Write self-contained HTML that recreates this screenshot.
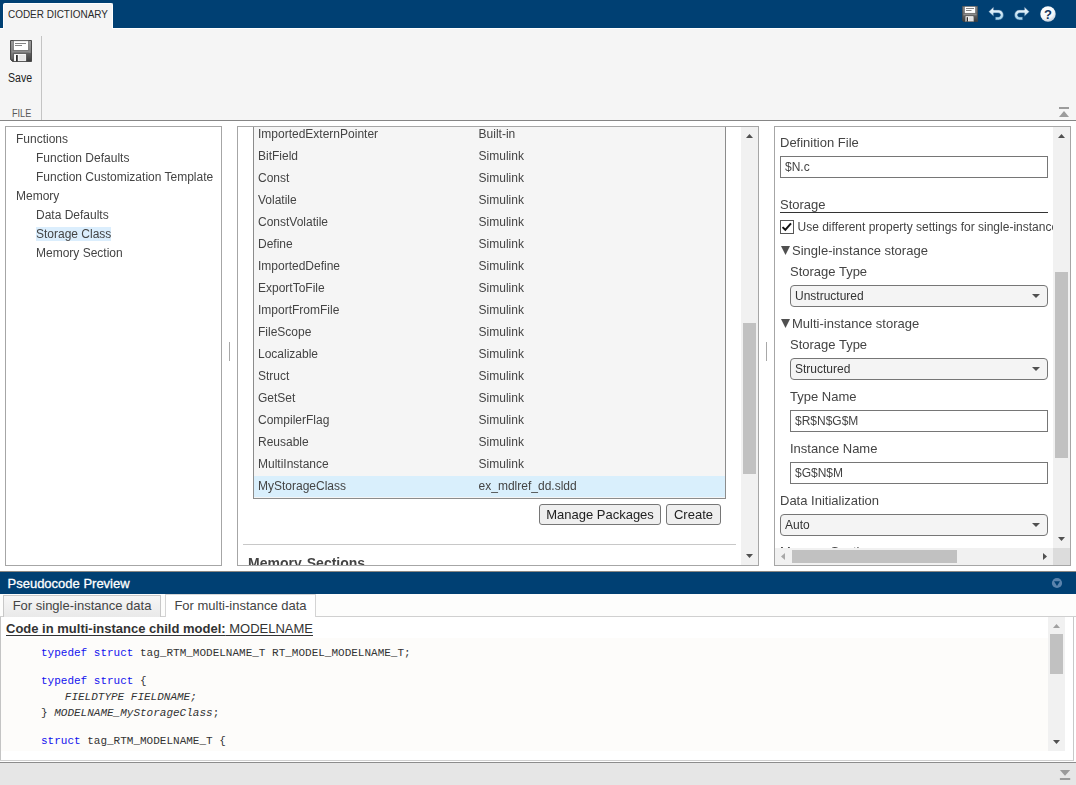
<!DOCTYPE html>
<html>
<head>
<meta charset="utf-8">
<title>Coder Dictionary</title>
<style>
html,body{margin:0;padding:0;}
body{width:1076px;height:785px;overflow:hidden;position:relative;background:#fff;font-family:"Liberation Sans",sans-serif;font-size:13px;color:#444;}
.abs{position:absolute;}
.nw{white-space:nowrap;}
/* top bar */
#topbar{left:0;top:0;width:1076px;height:28px;background:#004073;}
#tab{left:3px;top:3px;width:110px;height:26px;background:#f5f5f5;border-radius:2px 2px 0 0;border:1px solid #fff;border-bottom:none;box-sizing:border-box;z-index:2;}
.sx{display:inline-block;transform-origin:0 50%;white-space:nowrap;}
#tabtxt{left:8px;top:3px;height:22px;line-height:22px;font-size:11px;color:#2a2a2a;transform:scaleX(0.905);}
#toolstrip{left:0;top:28px;width:1076px;height:93px;background:#f5f5f5;border-top:1px solid #fff;border-bottom:1px solid #858585;box-sizing:border-box;}
#sep1{left:41px;top:36px;width:1px;height:84px;background:#c4c4c4;}
#savetxt{left:8.4px;top:70px;font-size:12px;line-height:16px;color:#222;transform:scaleX(0.88);}
#filetxt{left:11.6px;top:106px;font-size:11px;line-height:14px;color:#585858;transform:scaleX(0.83);}
/* panels */
.panel{border:1px solid #a6a6a6;background:#fff;box-sizing:border-box;overflow:hidden;will-change:transform;}
#left{left:5px;top:126px;width:217px;height:440px;}
.tree{left:0;height:19px;line-height:19px;font-size:12px;color:#444;white-space:nowrap;}
.tree span{display:inline-block;padding:0 0;}
#mid{left:237px;top:126px;width:522px;height:440px;}
#right{left:774px;top:126px;width:297px;height:440px;}
.split{width:1px;height:19px;top:342px;background:#a8a8a8;}
/* table */
#tbl{left:15px;top:-1px;width:473px;height:373px;background:#f5f5f5;border:1px solid #8c8c8c;box-sizing:border-box;}
.row{left:0;width:471px;height:22px;line-height:22px;font-size:12px;color:#444;}
.row .c1{position:absolute;left:4px;top:0;white-space:nowrap;}
.row .c2{position:absolute;left:224.6px;top:0;white-space:nowrap;}
.btn{box-sizing:border-box;height:22px;line-height:20px;border:1px solid #767676;border-radius:3px;background:#efefef;color:#222;font-size:14px;text-align:center;white-space:nowrap;}
/* scrollbars */
.sbv{background:#f1f1f1;}
.thumb{background:#c1c1c1;}
.arr{width:0;height:0;border-style:solid;}
/* right form */
.lbl{font-size:13px;color:#444;line-height:18px;white-space:nowrap;}
.inp{box-sizing:border-box;height:22px;border:1px solid #767676;background:#fff;font-size:12px;line-height:20px;color:#444;padding-left:4px;white-space:nowrap;}
.sel{box-sizing:border-box;height:22px;border:1px solid #767676;border-radius:4px;background:#f4f4f4;font-size:12px;line-height:20px;color:#333;padding-left:4px;white-space:nowrap;}
/* bottom */
#pphead{left:0;top:571px;width:1076px;height:23px;background:#004073;border-top:1px solid #8a8782;box-sizing:border-box;}
#pptxt{-webkit-text-stroke:0.3px #fff;left:7.5px;top:-0.5px;line-height:23px;font-size:13px;color:#fff;white-space:nowrap;}
#tabbar{left:0;top:594px;width:1076px;height:23px;background:#fdfdfc;border-bottom:1px solid #d0d0d0;box-sizing:border-box;}
.ptab{box-sizing:border-box;top:595px;height:22px;line-height:20px;border:1px solid #c8c8c8;border-bottom:none;font-size:13px;color:#444;text-align:center;white-space:nowrap;}
#code{left:0;top:617px;width:1074px;height:144px;background:#fff;overflow:hidden;border-right:1px solid #c8c8c8;border-bottom:1px solid #d0d0d0;box-sizing:border-box;}
#codebg{left:1px;top:21px;width:1047px;height:113px;background:#fdfcfa;}
#codeleft{left:0;top:0;width:1px;height:143px;background:#c4c4c4;}
.cl{left:41px;font-family:"Liberation Mono",monospace;font-size:11px;line-height:16px;color:#333;white-space:pre;}
.kw{color:#1212ee;}
#status{left:0;top:762px;width:1076px;height:23px;background:#e6e6e6;border-top:1px solid #8c8c8c;box-sizing:border-box;}
</style>
</head>
<body>
<div id="topbar" class="abs"></div>
<div id="tab" class="abs"></div>
<div id="tabtxt" class="abs sx" style="z-index:3">CODER DICTIONARY</div>
<div id="toolstrip" class="abs"></div>
<div id="sep1" class="abs"></div>
<div id="savetxt" class="abs sx">Save</div>
<div id="filetxt" class="abs sx">FILE</div>

<svg class="abs" style="left:10px;top:40px" width="22" height="22" viewBox="0 0 22 22">
  <defs>
    <linearGradient id="fg1" x1="0" y1="0" x2="0" y2="1"><stop offset="0" stop-color="#8a8a8a"/><stop offset="0.5" stop-color="#6a6a6a"/><stop offset="1" stop-color="#3c3c3c"/></linearGradient>
  </defs>
  <path d="M0.5 0.5 H21.5 V21.5 H2.5 L0.5 19.5 Z" fill="url(#fg1)" stroke="#4a4a4a" stroke-width="1"/>
  <rect x="3.5" y="0.8" width="15" height="9.6" fill="#ffffff" stroke="#5a5a5a" stroke-width="0.6"/>
  <rect x="5" y="3" width="11" height="0.9" fill="#777"/>
  <rect x="5" y="5" width="7" height="0.9" fill="#777"/>
  <rect x="1" y="1" width="2.3" height="18.5" fill="#fff" opacity="0.16"/>
  <rect x="18.8" y="1" width="2.3" height="12" fill="#fff" opacity="0.16"/>
  <rect x="2" y="11" width="18" height="1.6" fill="#8c8c8c"/>
  <rect x="3.8" y="13.8" width="12.4" height="7.4" fill="#ffffff" stroke="#444" stroke-width="0.5"/>
  <rect x="6" y="15" width="1.8" height="6.4" fill="#2e2e2e"/>
  <rect x="8.6" y="15" width="7" height="5.6" fill="#e4e4e4"/>
</svg>
<svg class="abs" style="left:962px;top:6px" width="16" height="16" viewBox="0 0 16 16">
  <defs>
    <linearGradient id="fg2" x1="0" y1="0" x2="0" y2="1"><stop offset="0" stop-color="#8c8c8c"/><stop offset="0.5" stop-color="#6a6a6a"/><stop offset="1" stop-color="#3a3a3a"/></linearGradient>
  </defs>
  <path d="M0.3 0.3 H15.7 V15.7 H1.6 L0.3 14.4 Z" fill="url(#fg2)" stroke="#444" stroke-width="0.6"/>
  <rect x="2.6" y="0.6" width="10.8" height="6.6" fill="#ffffff" stroke="#666" stroke-width="0.5"/>
  <rect x="4" y="2" width="8" height="0.9" fill="#777"/>
  <rect x="4" y="4" width="5.5" height="0.9" fill="#777"/>
  <rect x="1.5" y="8" width="13" height="1.3" fill="#8c8c8c"/>
  <rect x="3.2" y="10" width="8.6" height="5.6" fill="#ffffff" stroke="#444" stroke-width="0.4"/>
  <rect x="4.6" y="11.2" width="1.4" height="4.4" fill="#2e2e2e"/>
  <rect x="6.6" y="11.2" width="4.6" height="3.8" fill="#e0e0e0"/>
</svg>
<svg class="abs" style="left:988px;top:6px" width="16" height="16" viewBox="0 0 16 16">
  <defs>
    <linearGradient id="ug" x1="0" y1="0" x2="0" y2="1"><stop offset="0" stop-color="#ffffff"/><stop offset="1" stop-color="#9fd0ea"/></linearGradient>
  </defs>
  <path d="M0.7 5.7 L5.6 1 V4 H10.4 C13.6 4 15.4 6.2 15.4 9 C15.4 11.8 13.6 13.9 10.4 13.9 H7.4 V11.1 H10.2 C11.6 11.1 12.5 10.2 12.5 9 C12.5 7.8 11.6 6.9 10.2 6.9 H5.6 V10.2 Z" fill="url(#ug)" stroke="#2a5f8e" stroke-width="0.5"/>
</svg>
<svg class="abs" style="left:1014px;top:6px" width="16" height="16" viewBox="0 0 16 16">
  <g transform="translate(16,0) scale(-1,1)">
  <path d="M0.7 5.7 L5.6 1 V4 H10.4 C13.6 4 15.4 6.2 15.4 9 C15.4 11.8 13.6 13.9 10.4 13.9 H7.4 V11.1 H10.2 C11.6 11.1 12.5 10.2 12.5 9 C12.5 7.8 11.6 6.9 10.2 6.9 H5.6 V10.2 Z" fill="url(#ug)" stroke="#2a5f8e" stroke-width="0.5"/>
  </g>
</svg>
<svg class="abs" style="left:1040px;top:6px" width="16" height="16" viewBox="0 0 16 16">
  <defs>
    <radialGradient id="hg" cx="0.4" cy="0.3" r="0.8"><stop offset="0" stop-color="#ffffff"/><stop offset="0.6" stop-color="#f4f7fa"/><stop offset="1" stop-color="#b4c4d4"/></radialGradient>
  </defs>
  <circle cx="8" cy="8" r="7.7" fill="url(#hg)"/>
  <text x="8" y="12.7" text-anchor="middle" font-family="Liberation Sans, sans-serif" font-weight="bold" font-size="13" fill="#16365c">?</text>
</svg>
<!-- collapse toolstrip -->
<svg class="abs" style="left:1058px;top:106px" width="13" height="12" viewBox="0 0 13 12">
  <rect x="1" y="1" width="10" height="2" fill="#9c9c9c"/>
  <path d="M1 11 L6 5 L11 11 Z" fill="#9c9c9c"/>
</svg>
<!-- left panel -->
<div id="left" class="abs panel">
  <div class="abs tree" style="top:3px;left:10px;">Functions</div>
  <div class="abs tree" style="top:22px;left:30px;">Function Defaults</div>
  <div class="abs tree" style="top:41px;left:30px;">Function Customization Template</div>
  <div class="abs tree" style="top:60px;left:10px;">Memory</div>
  <div class="abs tree" style="top:79px;left:30px;">Data Defaults</div>
  <div class="abs" style="left:30px;top:100px;width:75px;height:14px;background:#dbeefd;"></div>
  <div class="abs tree" style="top:98px;left:30px;">Storage Class</div>
  <div class="abs tree" style="top:117px;left:30px;">Memory Section</div>
</div>
<div class="abs split" style="left:229px;"></div>
<div class="abs split" style="left:766px;"></div>

<!-- middle panel -->
<div id="mid" class="abs panel">
  <div id="tbl" class="abs">
    <div class="abs row" style="top:-4px;"><span class="c1">ImportedExternPointer</span><span class="c2">Built-in</span></div>
    <div class="abs row" style="top:18px;"><span class="c1">BitField</span><span class="c2">Simulink</span></div>
    <div class="abs row" style="top:40px;"><span class="c1">Const</span><span class="c2">Simulink</span></div>
    <div class="abs row" style="top:62px;"><span class="c1">Volatile</span><span class="c2">Simulink</span></div>
    <div class="abs row" style="top:84px;"><span class="c1">ConstVolatile</span><span class="c2">Simulink</span></div>
    <div class="abs row" style="top:106px;"><span class="c1">Define</span><span class="c2">Simulink</span></div>
    <div class="abs row" style="top:128px;"><span class="c1">ImportedDefine</span><span class="c2">Simulink</span></div>
    <div class="abs row" style="top:150px;"><span class="c1">ExportToFile</span><span class="c2">Simulink</span></div>
    <div class="abs row" style="top:172px;"><span class="c1">ImportFromFile</span><span class="c2">Simulink</span></div>
    <div class="abs row" style="top:194px;"><span class="c1">FileScope</span><span class="c2">Simulink</span></div>
    <div class="abs row" style="top:216px;"><span class="c1">Localizable</span><span class="c2">Simulink</span></div>
    <div class="abs row" style="top:238px;"><span class="c1">Struct</span><span class="c2">Simulink</span></div>
    <div class="abs row" style="top:260px;"><span class="c1">GetSet</span><span class="c2">Simulink</span></div>
    <div class="abs row" style="top:282px;"><span class="c1">CompilerFlag</span><span class="c2">Simulink</span></div>
    <div class="abs row" style="top:304px;"><span class="c1">Reusable</span><span class="c2">Simulink</span></div>
    <div class="abs row" style="top:326px;"><span class="c1">MultiInstance</span><span class="c2">Simulink</span></div>
    <div class="abs row" style="top:349px;background:#d9effc;height:21px;line-height:20px;"><span class="c1">MyStorageClass</span><span class="c2">ex_mdlref_dd.sldd</span></div>
  </div>
  <div class="abs btn" style="left:301px;top:377px;width:122px;height:21px;line-height:19px;font-size:13px;">Manage Packages</div>
  <div class="abs btn" style="left:428px;top:377px;width:55px;height:21px;line-height:19px;font-size:13px;">Create</div>
  <div class="abs" style="left:5px;top:417px;width:493px;height:1px;background:#c8c8c8;"></div>
  <div class="abs nw" style="left:10px;top:426.5px;font-size:14px;line-height:18px;font-weight:bold;color:#444;word-spacing:1.2px;">Memory Sections</div>
  <div class="abs sbv" style="left:503px;top:0;width:17px;height:438px;"></div>
  <svg class="abs" style="left:508px;top:7px" width="7" height="4" viewBox="0 0 7 4"><polygon points="0,4.0 7.0,4.0 3.5,0" fill="#505050"/></svg>
  <svg class="abs" style="left:508px;top:427px" width="7" height="4" viewBox="0 0 7 4"><polygon points="0,0 7.0,0 3.5,4.0" fill="#505050"/></svg>
  <div class="abs thumb" style="left:505px;top:196px;width:13px;height:151px;"></div>
</div>

<!-- right panel -->
<div id="right" class="abs panel">
  <div class="abs lbl" style="left:5px;top:6.5px;">Definition File</div>
  <div class="abs inp" style="left:5px;top:29px;width:268px;">$N.c</div>
  <div class="abs lbl" style="left:5px;top:68.5px;">Storage</div>
  <div class="abs" style="left:5px;top:85px;width:268px;height:1px;background:#333;"></div>
  <div class="abs" style="left:5px;top:93px;width:14px;height:14px;box-sizing:border-box;border:1px solid #555;background:#fff;"><svg width="12" height="12" viewBox="0 0 12 12" style="position:absolute;left:0;top:0"><path d="M1.5 6.1 L4.3 8.8 L10 2.3" fill="none" stroke="#111" stroke-width="2"/></svg></div>
  <div class="abs lbl" style="left:22.5px;top:90.5px;font-size:12px;">Use different property settings for single-instance</div>
  <svg class="abs" style="left:5.5px;top:118.5px" width="9" height="9" viewBox="0 0 9 9"><polygon points="0,0 9,0 4.5,9" fill="#505050"/></svg>
  <div class="abs lbl" style="left:17px;top:114.5px;">Single-instance storage</div>
  <div class="abs lbl" style="left:15px;top:135.5px;">Storage Type</div>
  <div class="abs sel" style="left:15px;top:158px;width:258px;">Unstructured</div>
  <svg class="abs" style="left:257px;top:167px" width="8" height="4" viewBox="0 0 8 4"><polygon points="0,0 8,0 4,4" fill="#505050"/></svg>
  <svg class="abs" style="left:5.5px;top:191.5px" width="9" height="9" viewBox="0 0 9 9"><polygon points="0,0 9,0 4.5,9" fill="#505050"/></svg>
  <div class="abs lbl" style="left:17px;top:187.5px;">Multi-instance storage</div>
  <div class="abs lbl" style="left:15px;top:208.5px;">Storage Type</div>
  <div class="abs sel" style="left:15px;top:231px;width:258px;">Structured</div>
  <svg class="abs" style="left:257px;top:240px" width="8" height="4" viewBox="0 0 8 4"><polygon points="0,0 8,0 4,4" fill="#505050"/></svg>
  <div class="abs lbl" style="left:15px;top:260.5px;">Type Name</div>
  <div class="abs inp" style="left:15px;top:283px;width:258px;">$R$N$G$M</div>
  <div class="abs lbl" style="left:15px;top:312.5px;">Instance Name</div>
  <div class="abs inp" style="left:15px;top:335px;width:258px;">$G$N$M</div>
  <div class="abs lbl" style="left:5px;top:364.5px;">Data Initialization</div>
  <div class="abs sel" style="left:5px;top:387px;width:268px;">Auto</div>
  <svg class="abs" style="left:257px;top:396px" width="8" height="4" viewBox="0 0 8 4"><polygon points="0,0 8,0 4,4" fill="#505050"/></svg>
  <div class="abs lbl" style="left:5px;top:415.8px;">Memory Section</div>
  <div class="abs sbv" style="left:278px;top:0;width:17px;height:438px;"></div>
  <svg class="abs" style="left:283px;top:7px" width="7" height="4" viewBox="0 0 7 4"><polygon points="0,4.0 7.0,4.0 3.5,0" fill="#505050"/></svg>
  <svg class="abs" style="left:283px;top:410px" width="7" height="4" viewBox="0 0 7 4"><polygon points="0,0 7.0,0 3.5,4.0" fill="#505050"/></svg>
  <div class="abs thumb" style="left:280px;top:145px;width:13px;height:186px;"></div>
  <div class="abs sbv" style="left:0;top:421px;width:278px;height:17px;"></div>
  <div class="abs" style="left:278px;top:421px;width:17px;height:17px;background:#dcdcdc;"></div>
  <svg class="abs" style="left:6px;top:426px" width="4" height="7" viewBox="0 0 4 7"><polygon points="4.0,0 4.0,7.0 0,3.5" fill="#a8a8a8"/></svg>
  <svg class="abs" style="left:268px;top:426px" width="4" height="7" viewBox="0 0 4 7"><polygon points="0,0 0,7.0 4.0,3.5" fill="#505050"/></svg>
  <div class="abs thumb" style="left:17px;top:423px;width:165px;height:13px;"></div>
</div>

<!-- bottom -->
<div id="pphead" class="abs"><div id="pptxt" class="abs">Pseudocode Preview</div></div>
<div id="tabbar" class="abs"></div>
<div class="abs ptab" style="left:3px;width:158px;background:linear-gradient(#f6f6f6,#e9e9e9);">For single-instance data</div>
<div class="abs ptab" style="left:165px;width:151px;background:#fff;top:594px;height:24px;line-height:22px;border-color:#d4d4d4;">For multi-instance data</div>
<div id="code" class="abs">
  <div id="codebg" class="abs"></div><div id="codeleft" class="abs"></div>
  <div class="abs nw" style="left:6px;top:3px;font-size:13px;line-height:18px;color:#333;text-decoration:underline;text-underline-offset:2px;"><b>Code in multi-instance child model:</b> MODELNAME</div>
  <div class="abs cl" style="top:28px;"><span class="kw">typedef struct</span> tag_RTM_MODELNAME_T RT_MODEL_MODELNAME_T;</div>
  <div class="abs cl" style="top:56px;"><span class="kw">typedef struct</span> {</div>
  <div class="abs cl" style="top:72px;left:64.8px;"><i>FIELDTYPE FIELDNAME;</i></div>
  <div class="abs cl" style="top:88px;">} <i>MODELNAME_MyStorageClass</i>;</div>
  <div class="abs cl" style="top:116px;"><span class="kw">struct</span> tag_RTM_MODELNAME_T {</div>
  <div class="abs sbv" style="left:1048px;top:0;width:17px;height:134px;"></div>
  <svg class="abs" style="left:1053px;top:7px" width="7" height="4" viewBox="0 0 7 4"><polygon points="0,4.0 7.0,4.0 3.5,0" fill="#a0a0a0"/></svg>
  <svg class="abs" style="left:1053px;top:123px" width="7" height="4" viewBox="0 0 7 4"><polygon points="0,0 7.0,0 3.5,4.0" fill="#505050"/></svg>
  <div class="abs thumb" style="left:1050px;top:17px;width:13px;height:40px;"></div>
</div>
<div id="status" class="abs"></div>
<!-- pseudocode header menu icon -->
<svg class="abs" style="left:1051px;top:577px" width="12" height="12" viewBox="0 0 12 12">
  <circle cx="6" cy="6" r="5.1" fill="#5b84ad"/>
  <path d="M3 4.2 H9 L6 9 Z" fill="#004073"/>
</svg>
<!-- status expand icon -->
<svg class="abs" style="left:1058px;top:769px" width="13" height="12" viewBox="0 0 13 12">
  <path d="M1.9 1 H12.2 L7 6.8 Z" fill="#9a9a9a"/>
  <rect x="1.9" y="9" width="10.3" height="2" fill="#9a9a9a"/>
</svg>

</body>
</html>
